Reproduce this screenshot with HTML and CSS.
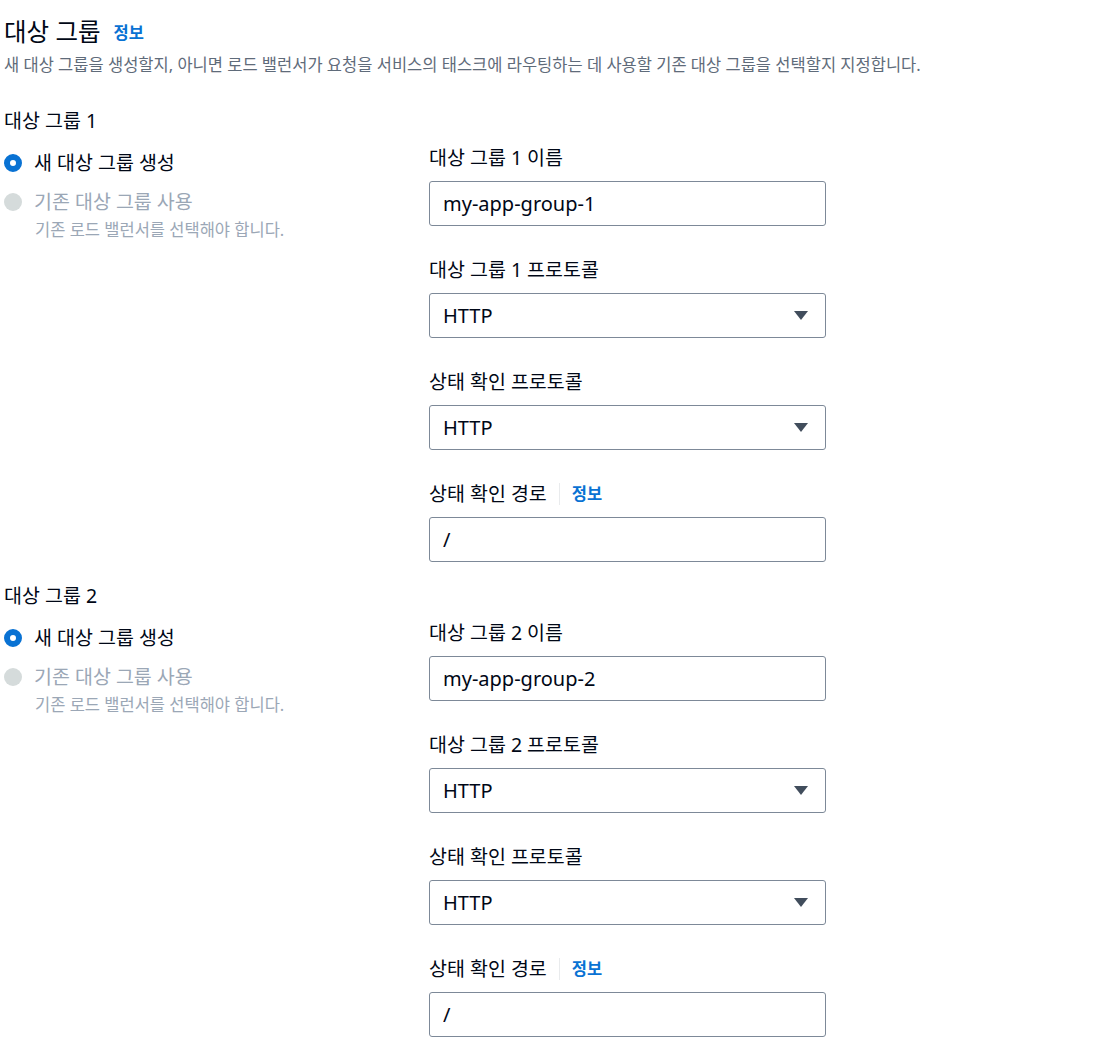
FILE: index.html
```html
<!DOCTYPE html>
<html lang="ko">
<head>
    <meta charset="UTF-8">
    <meta name="viewport" content="width=device-width, initial-scale=1.0">
    <title>대상 그룹</title>
    <link rel="stylesheet" href="styles.css">
</head>
<body>
    <div class="page">
        <div class="title-row">
            <h1>대상 그룹</h1>
            <a class="info-link" href="#">정보</a>
        </div>
        <p class="desc">새 대상 그룹을 생성할지, 아니면 로드 밸런서가 요청을 서비스의 태스크에 라우팅하는 데 사용할 기존 대상 그룹을 선택할지 지정합니다.</p>

        <section class="group">
            <h2>대상 그룹 1</h2>
            <div class="group-body">
                <div class="choices">
                    <label class="radio">
                        <span class="dot checked"></span>
                        <span>새 대상 그룹 생성</span>
                    </label>
                    <label class="radio disabled">
                        <span class="dot"></span>
                        <span>기존 대상 그룹 사용</span>
                    </label>
                    <p class="radio-hint">기존 로드 밸런서를 선택해야 합니다.</p>
                </div>
                <div class="fields">
                    <div class="field">
                        <label class="field-label">대상 그룹 1 이름</label>
                        <input class="text-input" type="text" value="my-app-group-1">
                    </div>
                    <div class="field">
                        <label class="field-label">대상 그룹 1 프로토콜</label>
                        <div class="select">
                            <span>HTTP</span>
                            <svg width="14" height="10" viewBox="0 0 14 10"><path d="M0 0h14L7 9z" fill="#414d5c"/></svg>
                        </div>
                    </div>
                    <div class="field">
                        <label class="field-label">상태 확인 프로토콜</label>
                        <div class="select">
                            <span>HTTP</span>
                            <svg width="14" height="10" viewBox="0 0 14 10"><path d="M0 0h14L7 9z" fill="#414d5c"/></svg>
                        </div>
                    </div>
                    <div class="field">
                        <div class="field-label">
                            <span>상태 확인 경로</span>
                            <span class="divider"></span>
                            <a class="info-link" href="#">정보</a>
                        </div>
                        <input class="text-input" type="text" value="/">
                    </div>
                </div>
            </div>
        </section>

        <section class="group">
            <h2>대상 그룹 2</h2>
            <div class="group-body">
                <div class="choices">
                    <label class="radio">
                        <span class="dot checked"></span>
                        <span>새 대상 그룹 생성</span>
                    </label>
                    <label class="radio disabled">
                        <span class="dot"></span>
                        <span>기존 대상 그룹 사용</span>
                    </label>
                    <p class="radio-hint">기존 로드 밸런서를 선택해야 합니다.</p>
                </div>
                <div class="fields">
                    <div class="field">
                        <label class="field-label">대상 그룹 2 이름</label>
                        <input class="text-input" type="text" value="my-app-group-2">
                    </div>
                    <div class="field">
                        <label class="field-label">대상 그룹 2 프로토콜</label>
                        <div class="select">
                            <span>HTTP</span>
                            <svg width="14" height="10" viewBox="0 0 14 10"><path d="M0 0h14L7 9z" fill="#414d5c"/></svg>
                        </div>
                    </div>
                    <div class="field">
                        <label class="field-label">상태 확인 프로토콜</label>
                        <div class="select">
                            <span>HTTP</span>
                            <svg width="14" height="10" viewBox="0 0 14 10"><path d="M0 0h14L7 9z" fill="#414d5c"/></svg>
                        </div>
                    </div>
                    <div class="field">
                        <div class="field-label">
                            <span>상태 확인 경로</span>
                            <span class="divider"></span>
                            <a class="info-link" href="#">정보</a>
                        </div>
                        <input class="text-input" type="text" value="/">
                    </div>
                </div>
            </div>
        </section>
    </div>
</body>
</html>
```

FILE: styles.css
```css
body {
    margin: 0;
    background-color: #fff;
    font-family: 'Noto Sans', 'Noto Sans CJK KR', sans-serif;
    color: #000716;
}

.page {
    padding: 17px 4px 0 4px;
}

.title-row {
    display: flex;
    align-items: center;
    gap: 13px;
    height: 30px;
}

h1 {
    margin: 0;
    font-size: 24.5px;
    font-weight: 400;
    line-height: 30px;
}

.info-link {
    color: #0972d3;
    font-weight: 700;
    font-size: 16.5px;
    text-decoration: none;
}

.desc {
    margin: 7px 0 0 0;
    font-size: 16.5px;
    line-height: 22px;
    color: #5f6b7a;
}

.group {
    margin-top: 32px;
}

.group + .group {
    margin-top: 21px;
}

h2 {
    margin: 0;
    font-size: 19.5px;
    font-weight: 400;
    line-height: 26px;
}

.group-body {
    display: grid;
    grid-template-columns: 425px 397px;
    margin-top: 11px;
}

.choices {
    padding-top: 5px;
}

.radio {
    display: flex;
    align-items: center;
    gap: 12px;
    font-size: 19.5px;
    line-height: 26px;
    margin-bottom: 13px;
}

.dot {
    width: 18px;
    height: 18px;
    border-radius: 50%;
    box-sizing: border-box;
    background-color: #d5dbdb;
    flex-shrink: 0;
}

.dot.checked {
    background-color: #fff;
    border: 6px solid #0972d3;
}

.radio.disabled {
    color: #9ba7b6;
    margin-bottom: 4px;
}

.radio-hint {
    margin: 0 0 0 31px;
    font-size: 16.5px;
    line-height: 22px;
    color: #9ba7b6;
}

.fields {
    display: flex;
    flex-direction: column;
    gap: 31px;
}

.field {
    display: flex;
    flex-direction: column;
    gap: 10px;
}

.field-label {
    display: flex;
    align-items: center;
    font-size: 19.5px;
    line-height: 26px;
}

.divider {
    width: 1px;
    height: 22px;
    background-color: #e9ebed;
    margin: 0 12px;
}

.text-input,
.select {
    box-sizing: border-box;
    width: 397px;
    height: 45px;
    border: 1px solid #7d8998;
    border-radius: 3px;
    padding: 0 17px 0 13px;
    font-family: 'Noto Sans', 'Noto Sans CJK KR', sans-serif;
    font-size: 20px;
    color: #000716;
    background-color: #fff;
}

.select {
    display: flex;
    align-items: center;
    justify-content: space-between;
}
```
